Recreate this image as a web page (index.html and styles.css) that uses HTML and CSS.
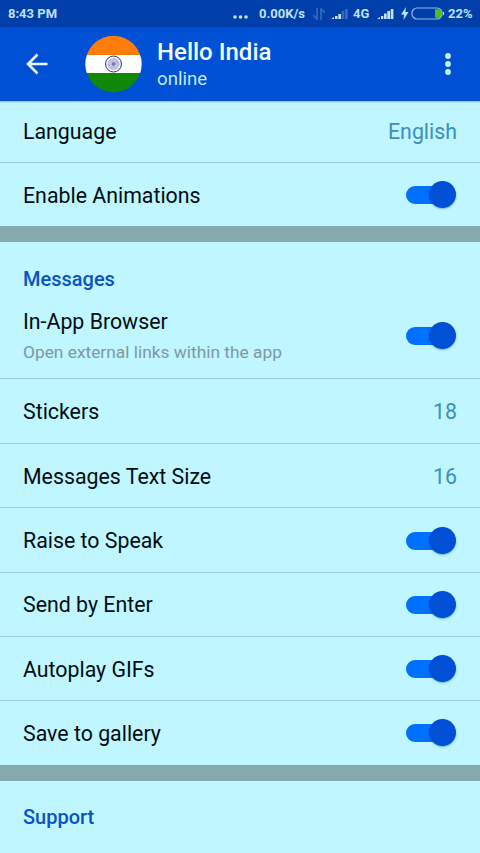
FILE: index.html
```
<!DOCTYPE html>
<html lang="en">
<head>
<meta charset="utf-8">
<title>Settings</title>
<link rel="stylesheet" href="styles.css">
</head>
<body>
<div class="status">
  <span class="clock">8:43 PM</span>
  <svg class="status-icon dots" width="16" height="4" viewBox="0 0 16 4"><circle cx="2" cy="2" r="1.8"/><circle cx="7.500" cy="2" r="1.8"/><circle cx="13" cy="2" r="1.8"/></svg>
  <span class="speed">0.00K/s</span>
  <svg class="status-icon data" width="12" height="12" viewBox="0 0 12 12"><path d="M4 0v11L0 7M8 12V1l4 4" fill="none" stroke="#3568c2" stroke-width="1.700"/></svg>
  <svg class="status-icon signal1" width="17" height="12" viewBox="0 0 17 12"><path d="M0 11L3 9v2zM4 8h2.500v3H4zM7.300 6h2.700v5H7.300z"/><path d="M10.600 3h2.700v8h-2.700zM14 1h2.700v10H14z" fill="#3568c2"/></svg>
  <span class="network">4G</span>
  <svg class="status-icon signal2" width="17" height="12" viewBox="0 0 17 12"><path d="M0 11L3 9v2zM4 8h2.300v3H4zM7 5.500h2.700V11H7zM10.300 3h2.700v8h-2.700zM13.700 1h2.700v10h-2.700z"/></svg>
  <svg class="status-icon bolt" width="8" height="14" viewBox="0 0 8 14"><path d="M5 0L0 7.500h3L2.500 13 7.500 5H4.300z"/></svg>
  <svg class="status-icon battery" width="33" height="13" viewBox="0 0 33 13"><rect x="1" y="1" width="30" height="11" rx="5" fill="none" stroke="#91bce8" stroke-width="1.200"/><path d="M24 2.200h3.500a2.500 2.500 0 0 1 2.500 2.500v3.600a2.500 2.500 0 0 1-2.500 2.500H24z" fill="#4bc316"/><path d="M32 5h1v3h-1z"/></svg>
  <span class="percent">22%</span>
</div>
<header class="bar">
  <svg class="back" width="22" height="22" viewBox="0 0 22 22"><path d="M21.500 11H2M11.500 1.500L2 11l9.500 9.500" fill="none" stroke="#effcff" stroke-width="2.600"/></svg>
  <svg class="avatar" width="57" height="57" viewBox="0 0 57 57">
    <defs><clipPath id="round"><circle cx="28.500" cy="28" r="28.200"/></clipPath></defs>
    <g clip-path="url(#round)"><path fill="#ff7d0a" d="M0 0h57v19H0z"/><path fill="#fff" d="M0 19h57v18H0z"/><path fill="#118807" d="M0 37h57v20H0z"/></g>
    <circle cx="28.500" cy="28" r="8" fill="#f4f4fc" stroke="#34365c" stroke-width="1"/>
    <circle cx="28.500" cy="28" r="4" fill="none" stroke="#8c8dc4" stroke-width="4" stroke-dasharray=".65 .4" opacity=".8"/>
    <circle cx="28.500" cy="28" r="2" fill="#7779b4"/>
  </svg>
  <div class="who"><div class="name">Hello India</div><div class="state">online</div></div>
  <svg class="more" width="6" height="22" viewBox="0 0 6 22"><circle cx="3" cy="3" r="2.900"/><circle cx="3" cy="11" r="2.900"/><circle cx="3" cy="19" r="2.900"/></svg>
</header>
<main>
  <section class="group first">
    <div class="row"><span>Language</span><span class="value">English</span></div>
    <div class="row"><span>Enable Animations</span><span class="switch"></span></div>
  </section>
  <section class="group">
    <h2>Messages</h2>
    <div class="row tall"><div><div class="label">In-App Browser</div><div class="hint">Open external links within the app</div></div><span class="switch"></span></div>
    <div class="row"><span>Stickers</span><span class="value">18</span></div>
    <div class="row"><span>Messages Text Size</span><span class="value">16</span></div>
    <div class="row"><span>Raise to Speak</span><span class="switch"></span></div>
    <div class="row"><span>Send by Enter</span><span class="switch"></span></div>
    <div class="row"><span>Autoplay GIFs</span><span class="switch"></span></div>
    <div class="row end"><span>Save to gallery</span><span class="switch"></span></div>
  </section>
  <section class="group last">
    <h2>Support</h2>
  </section>
</main>
</body>
</html>
```
FILE: styles.css
```
* { box-sizing: border-box; }
body {
  margin: 0;
  height: 853px;
  overflow: hidden;
  display: flex;
  flex-direction: column;
  background: #bff6ff;
  color: #020d12;
  font-family: Roboto, sans-serif;
}
svg { display: block; flex: none; }
.status {
  flex: none;
  height: 27px;
  display: flex;
  align-items: center;
  padding: 0 0 0 8px;
  background: #003fa9;
  color: #bfe1fa;
  font-size: 13px;
  line-height: 27px;
  font-weight: 700;
  white-space: nowrap;
}
.status span { flex: none; }
.clock { width: 225px; }
.status-icon { fill: #bfe1fa; }
.dots { margin-top: 7px; }
.speed { width: 54px; margin-left: 10px; }
.data { margin-right: 6px; }
.network { width: 24px; margin-left: 5px; }
.bolt { margin-left: 7px; }
.battery { margin-left: 2px; }
.percent { margin-left: 4px; }
.bar {
  flex: none;
  height: 74px;
  display: flex;
  align-items: center;
  padding: 0 29px 0 26px;
  background: #0050d5;
}
.avatar { margin-left: 37px; }
.who { flex: 1; margin-left: 15px; padding-top: 2px; }
.name {
  color: #effcff;
  font-size: 24px;
  line-height: 28px;
  font-weight: 500;
}
.state {
  color: #bfeaff;
  font-size: 18.670px;
  line-height: 26px;
}
.more { fill: #c5f8ff; }
main { flex: 1; overflow: hidden; background: linear-gradient(#86bfe0, #bff6ff 2px); }
.group + .group { border-top: 16px solid #84aab0; }
.row {
  height: 64.330px;
  display: flex;
  align-items: center;
  justify-content: space-between;
  padding: 1.500px 23px 0;
  border-bottom: 1px solid #9bc9d5;
  font-size: 21.330px;
}
.first .row { height: 63px; padding-top: 1px; }
.first .row:first-child { height: 62px; padding-top: 0; }
.row:last-child { border-bottom: 0; }
.row.end { height: 64px; padding-top: 0; }
.value { color: #3c8fbd; }
h2 {
  margin: 0;
  padding: 23px 23px 0;
  color: #0b52c4;
  font-size: 20px;
  line-height: 28px;
  font-weight: 500;
}
.last h2 { padding-top: 22px; }
.row.tall { height: 86.400px; padding-top: 1px; }
.tall + .row { height: 64.500px; }
.label { line-height: 28px; }
.hint {
  margin-top: 3px;
  color: #81979e;
  font-size: 17.330px;
  line-height: 26px;
}
.switch {
  position: relative;
  width: 50px;
  height: 28px;
  margin-right: 1px;
}
.switch::before {
  content: "";
  position: absolute;
  left: 0;
  top: 5px;
  width: 45px;
  height: 18px;
  border-radius: 9px;
  background: #0070ff;
}
.switch::after {
  content: "";
  position: absolute;
  right: 0;
  top: 0;
  width: 27px;
  height: 27px;
  border-radius: 50%;
  background: #0050d5;
  box-shadow: 0 1px 2px #00489966;
}
```
